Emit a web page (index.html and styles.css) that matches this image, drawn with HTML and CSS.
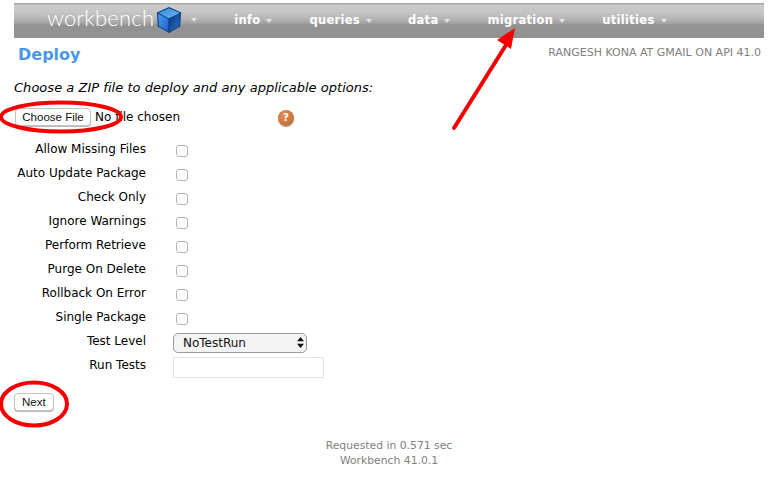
FILE: index.html
```html
<!DOCTYPE html>
<html lang="en">
<head>
<meta charset="utf-8">
<title>Workbench - Deploy</title>
<link rel="stylesheet" href="styles.css">
</head>
<body>
<div class="page">
  <nav class="nav">
    <div class="brand">
      <span class="brand-name">workbench</span>
      <svg class="cube" width="28" height="28" viewBox="0 0 30 30">
        <defs>
          <linearGradient id="cubeTop" x1="0" y1="0" x2="1" y2="1"><stop offset="0" stop-color="#2f86dc"/><stop offset="1" stop-color="#6db8f5"/></linearGradient>
          <linearGradient id="cubeLeft" x1="0" y1="0" x2="1" y2="1"><stop offset="0" stop-color="#4aa2f0"/><stop offset="1" stop-color="#1c5cc0"/></linearGradient>
          <linearGradient id="cubeRight" x1="0" y1="0" x2="1" y2="1"><stop offset="0" stop-color="#0f3a80"/><stop offset="1" stop-color="#2a70c8"/></linearGradient>
        </defs>
        <path d="M15 1 L28 7 L27 22 L15 29 L3 22 L2 7 Z" fill="#123f86"/>
        <path d="M15 2.5 L26.5 7.5 L15 13 L3.5 7.5 Z" fill="url(#cubeTop)"/>
        <path d="M3.5 8.5 L14.3 14 L14.3 27.5 L4.2 21.5 Z" fill="url(#cubeLeft)"/>
        <path d="M26.5 8.5 L15.7 14 L15.7 27.5 L25.8 21.5 Z" fill="url(#cubeRight)"/>
      </svg>
      <span class="caret"></span>
    </div>
    <ul class="menu">
      <li class="menu-item item-info">info<span class="caret"></span></li>
      <li class="menu-item item-queries">queries<span class="caret"></span></li>
      <li class="menu-item item-data">data<span class="caret"></span></li>
      <li class="menu-item item-migration">migration<span class="caret"></span></li>
      <li class="menu-item item-utilities">utilities<span class="caret"></span></li>
    </ul>
  </nav>

  <header class="head">
    <h1 class="title">Deploy</h1>
    <div class="user">RANGESH KONA AT GMAIL ON API 41.0</div>
  </header>

  <form class="form">
    <p class="intro">Choose a ZIP file to deploy and any applicable options:</p>
    <div class="file-row">
      <button type="button" class="btn btn-file">Choose File</button>
      <span class="file-text">No file chosen</span>
      <span class="help">?</span>
    </div>
    <div class="options">
      <label class="opt-label">Allow Missing Files</label><input class="check" type="checkbox">
      <label class="opt-label">Auto Update Package</label><input class="check" type="checkbox">
      <label class="opt-label">Check Only</label><input class="check" type="checkbox">
      <label class="opt-label">Ignore Warnings</label><input class="check" type="checkbox">
      <label class="opt-label">Perform Retrieve</label><input class="check" type="checkbox">
      <label class="opt-label">Purge On Delete</label><input class="check" type="checkbox">
      <label class="opt-label">Rollback On Error</label><input class="check" type="checkbox">
      <label class="opt-label">Single Package</label><input class="check" type="checkbox">
      <label class="opt-label">Test Level</label>
      <div class="select-wrap">
        <select class="select"><option>NoTestRun</option></select>
        <svg class="select-arrows" width="7" height="11" viewBox="0 0 7 11"><path d="M3.5 0 L7 4.3 H0 Z M3.5 11 L0 6.7 H7 Z" fill="#111"/></svg>
      </div>
      <label class="opt-label">Run Tests</label><input class="text-input" type="text">
    </div>
    <button type="button" class="btn btn-next">Next</button>
  </form>

  <footer class="foot">
    <div>Requested in 0.571 sec</div>
    <div>Workbench 41.0.1</div>
  </footer>

  <svg class="marks" width="777" height="483" viewBox="0 0 777 483">
    <ellipse cx="61" cy="117" rx="60" ry="14.5" fill="none" stroke="#f40000" stroke-width="4"/>
    <ellipse cx="34" cy="404" rx="33" ry="21.5" fill="none" stroke="#f40000" stroke-width="4"/>
    <path d="M454 128 L506 45" stroke="#f40000" stroke-width="4" stroke-linecap="round"/>
    <path d="M515 28 L497 40 L511 49 Z" fill="#f40000"/>
  </svg>
</div>
</body>
</html>
```
FILE: styles.css
```css
* { box-sizing: border-box; }
html, body { margin: 0; padding: 0; background: #fff; }
body { font-family: "DejaVu Sans", Verdana, sans-serif; color: #000; font-size: 12px; }
.page { position: relative; width: 777px; height: 483px; overflow: hidden; padding: 3px 13px 0 14px; }

.nav {
  display: flex; height: 35px; align-items: flex-start;
  background: linear-gradient(#a8a8a8 0, #a8a8a8 1px, #cbcbcb 2px, #c6c6c6 9px, #b4b4b4 16px, #a4a4a4 20px, #929292 22px, #929292 100%);
}
.brand { display: flex; align-items: center; height: 30px; margin-left: 33px; }
.brand-name { font-family: "Lato", "DejaVu Sans", sans-serif; font-size: 22px; font-weight: 300; letter-spacing: .2px; color: #fff; line-height: 30px; }
.cube { margin-left: 1px; margin-top: 4px; flex: none; }
.caret { display: inline-block; width: 0; height: 0; border-left: 3.5px solid transparent; border-right: 3.5px solid transparent; border-top: 4px solid #e4e4e4; margin-left: 6px; vertical-align: middle; }
.brand .caret { margin-top: 4px; margin-left: 8px; }
.menu { list-style: none; display: flex; margin: 0; padding: 0; }
.menu-item { color: #fff; font-weight: bold; font-size: 11.5px; letter-spacing: .3px; line-height: 34px; white-space: nowrap; }
.item-info { margin-left: 37px; }
.item-queries { margin-left: 37px; }
.item-data { margin-left: 36px; }
.item-migration { margin-left: 37px; }
.item-utilities { margin-left: 37px; }

.head { display: flex; justify-content: space-between; align-items: flex-start; padding-left: 4px; padding-right: 3px; }
.title { margin: 7px 0 0; font-size: 16px; line-height: 19px; font-weight: bold; color: #4b97e8; }
.user { margin-top: 8px; font-size: 11px; line-height: 14px; color: #808080; }

.form { margin: 0; }
.intro { margin: 15px 0 0; font-style: italic; font-size: 13px; line-height: 18px; letter-spacing: .03px; }
.file-row { display: flex; align-items: center; margin-top: 10px; height: 20px; padding-left: 1px; }
.btn { font-family: "Liberation Sans", Arial, sans-serif; font-size: 11.5px; height: 18px; padding: 0 7px; background: #fff; border: 1px solid #c4c4c4; border-radius: 4px; color: #111; box-shadow: 0 1px 0 #bbb; }
.btn-file { width: 76px; padding: 0; }
.file-text { margin-left: 4px; font-size: 12px; }
.help { display: flex; align-items: center; justify-content: center; width: 16px; height: 16px; margin-left: 98px; margin-top: 2px; border-radius: 50%; background: radial-gradient(circle at 40% 35%, #e09058, #b8622a); box-shadow: 0 1px 1px #999; color: #fff; font-size: 10px; font-weight: bold; line-height: 1; }

.options { display: grid; grid-template-columns: 132px auto; grid-auto-rows: 24px; justify-content: start; column-gap: 27px; margin-top: 14px; }
.opt-label { text-align: right; font-size: 12px; line-height: 16px; }
.check { appearance: none; -webkit-appearance: none; width: 12px; height: 12px; margin: 4px 0 0 3px; background: #fff; border: 1px solid #b5b5b5; border-radius: 3px; }
.select-wrap { position: relative; width: 134px; height: 20px; }
.select { appearance: none; -webkit-appearance: none; width: 100%; height: 100%; padding: 0 0 0 9px; font-family: inherit; font-size: 12px; color: #111; background: #f4f4f4; border: 1px solid #9a9a9a; border-radius: 5px; }
.select-arrows { position: absolute; right: 3px; top: 4px; }
.text-input { width: 151px; height: 21px; margin: 0; border: 1px solid #e4e4e4; background: #fff; }

.btn-next { display: block; margin-top: 12px; height: 18px; padding: 0 7px; }

.foot { margin-top: 27px; text-align: center; font-size: 10.8px; line-height: 15px; color: #808080; }

.marks { position: absolute; left: 0; top: 0; pointer-events: none; }
```
